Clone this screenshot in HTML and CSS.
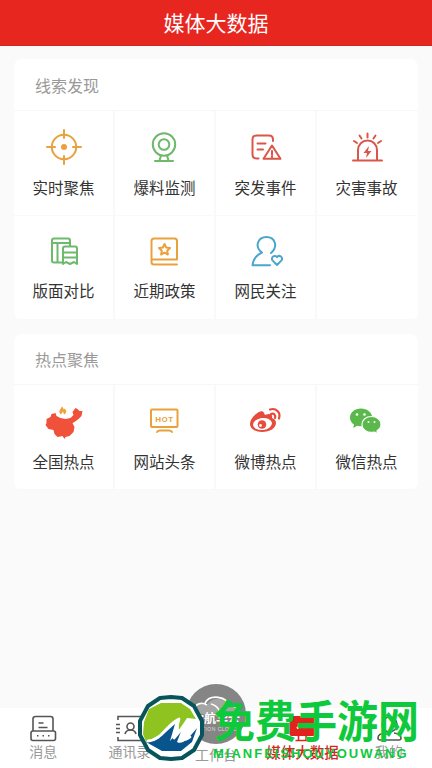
FILE: index.html
```html
<!DOCTYPE html>
<html lang="zh-CN">
<head>
    <meta charset="UTF-8">
    <meta name="viewport" content="width=device-width, initial-scale=1.0">
    <title>媒体大数据</title>
    <link rel="stylesheet" href="styles.css">
</head>

<body>
    <header class="header">媒体大数据</header>

    <main class="content">
        <section class="card">
            <h2 class="card-title">线索发现</h2>
            <div class="grid">
                <div class="item">
                    <svg class="icon orange" viewBox="0 0 40 40">
                        <circle cx="20" cy="20" r="12.2"/>
                        <path d="M20 3v8M20 29v8M3 20h8M29 20h8"/>
                        <circle class="solid" cx="20" cy="20" r="3"/>
                    </svg>
                    <span>实时聚焦</span>
                </div>
                <div class="item">
                    <svg class="icon green" viewBox="0 0 40 40">
                        <circle cx="19" cy="17.500" r="11.200"/>
                        <circle cx="19" cy="17.500" r="5.300"/>
                        <path d="M16 28.500l-1.500 5M22 28.500l1.500 5M10 34h18"/>
                    </svg>
                    <span>爆料监测</span>
                </div>
                <div class="item">
                    <svg class="icon red" viewBox="0 0 40 40">
                        <path d="M12.500 31.500H10.500Q6.500 31.500 6.500 27.500V12.500Q6.500 8.500 10.500 8.500H23Q27 8.500 27 12.500V14M11.500 16.500h8M11.500 22.500h5.500"/>
                        <path d="M26 18.500L34.500 31.800H17.500ZM26 24v3.500M26 29v1"/>
                    </svg>
                    <span>突发事件</span>
                </div>
                <div class="item">
                    <svg class="icon red" viewBox="0 0 40 40">
                        <path d="M11 33.500V23a9.500 9.500 0 0 1 19 0V33.500M6 33.500h29M20.500 6.500v4M12.500 8.500l2 3M28.500 8.500l-2 3M7 14l3 2M34 14l-3 2"/>
                        <path class="solid" d="M22 19l-5.500 7h3.500l-1 5 5.500-7h-3.500z"/>
                    </svg>
                    <span>灾害事故</span>
                </div>
                <div class="item">
                    <svg class="icon green" viewBox="0 0 40 40">
                        <path d="M18 31.500H10Q8 31.500 8 29.500V9.500Q8 7.500 10 7.500H24Q26 7.500 26 9.500V15M8 12h18M13.500 12v19"/>
                        <path d="M19 33V17.500Q19 15.500 21 15.500H31Q33 15.500 33 17.500V33l-3-2-4 2-4-2zM19 21.500h14M19 26.500h14"/>
                    </svg>
                    <span>版面对比</span>
                </div>
                <div class="item">
                    <svg class="icon orange" viewBox="0 0 40 40">
                        <path d="M32 28.500V10Q32 7.500 29.500 7.500H9Q6.500 7.500 6.500 10V31Q6.500 33.500 9 33.500H32M7 28.500h25"/>
                        <path d="M19.500 13l1.700 3.500 3.800.5-2.800 2.700.7 3.800-3.400-1.800-3.400 1.800.7-3.800L14 17l3.800-.5z"/>
                    </svg>
                    <span>近期政策</span>
                </div>
                <div class="item">
                    <svg class="icon blue" viewBox="0 0 40 40">
                        <path d="M24 34.300H6.500Q7.500 25.500 16 21.500C8 15.500 12 6 20.500 6S32.500 15.500 25 22"/>
                        <path d="M31 34l-4.500-4.600a2.700 2.700 0 0 1 4.500-3.300a2.700 2.700 0 0 1 4.500 3.300z"/>
                    </svg>
                    <span>网民关注</span>
                </div>
                <div class="item"></div>
            </div>
        </section>

        <section class="card">
            <h2 class="card-title">热点聚焦</h2>
            <div class="grid">
                <div class="item">
                    <svg class="icon" viewBox="0 0 40 40">
                        <path fill="#f0513a" d="M2.500 18l4-2 1-3 4-1 1 3 4 2 5 1 5-1 3-3-1-3 3-4 2 1 2 2h3l-1 5-3 3-4 3-2 1 2 4-1 5-4 4-4 1-1 2-2-3-5 1-3-3-1-4-5-1-3-4 1-2z"/>
                        <path fill="#f0a23a" d="M17 13.500c-3.500-3-.5-4.500.8-8 1.500 1.200 1.500 2 2 3l.8-1c2.500 2.500 2 4.500-.6 6l-1-3z"/>
                    </svg>
                    <span>全国热点</span>
                </div>
                <div class="item">
                    <svg class="icon orange" viewBox="0 0 40 40">
                        <rect x="6" y="8.500" width="26.500" height="17.500" rx="1"/>
                        <path d="M12 31q1-1.500 3-1.500h9q2 0 3 1.500"/>
                        <text class="hot" x="19.500" y="20.500">HOT</text>
                    </svg>
                    <span>网站头条</span>
                </div>
                <div class="item">
                    <svg class="icon" viewBox="0 0 40 40">
                        <path fill="#e64b3c" d="M18 12c-1-3-5-2-8 1-4 3-6 7-6 10 0 5 6 8 12 8 8 0 14-4 14-9 0-3-2-4-4-5 1-4-2-5-7-3z"/>
                        <ellipse cx="16.500" cy="23" rx="9.500" ry="6" fill="#fff" transform="rotate(-7 16.500 23)"/>
                        <circle cx="16" cy="23.500" r="4.300" fill="#e64b3c"/>
                        <circle cx="14.500" cy="24.500" r="1.400" fill="#fff"/>
                        <path stroke="#e64b3c" stroke-width="2.200" d="M24 8.500c6-2 11 3 9 9M25 13c3-1 5 1 4 4"/>
                    </svg>
                    <span>微博热点</span>
                </div>
                <div class="item">
                    <svg class="icon" viewBox="0 0 40 40">
                        <path fill="#5bb94c" d="M14 7.500C7.500 7.500 3 11.500 3 16.500c0 3 1.500 5.500 4 7l-.8 3.500 4-2.200c9 2 15-2 15-8.300 0-5-5-9-11.200-9z"/>
                        <path fill="#5bb94c" stroke="#fff" stroke-width="1.200" d="M24.500 15.500c-5.500 0-9.500 3.500-9.500 8 0 5 5 9 12.500 7.500l3 1.700-.5-3c2.500-1.500 4-3.500 4-6.200 0-4.500-4-8-9.500-8z"/>
                        <g fill="#fff"><circle cx="10" cy="13.500" r="1.300"/><circle cx="17.500" cy="13.500" r="1.300"/><circle cx="21.500" cy="21" r="1"/><circle cx="27.500" cy="21" r="1"/></g>
                    </svg>
                    <span>微信热点</span>
                </div>
            </div>
        </section>
    </main>

    <nav class="tabbar">
        <div class="tab">
            <svg class="tab-icon" viewBox="0 0 30 30">
                <path d="M5 18V6q0-2.500 2.500-2.500h15Q25 3.500 25 6v12M10.500 10h5M10.500 14.500h9"/>
                <rect x="3" y="18" width="24.500" height="9.500" rx="2"/>
                <path d="M9 22.800h1.500M14.500 22.800h1.500M20 22.800h1.500"/>
            </svg>
            <span>消息</span>
        </div>
        <div class="tab">
            <svg class="tab-icon" viewBox="0 0 30 30">
                <path d="M3 7V3.500h24v24H3V24M1 11.500h4M1 15.500h4M1 19.500h4"/>
                <circle cx="15.500" cy="13.500" r="3.500"/>
                <path d="M10 21q1-4 5.500-4t5.500 4"/>
            </svg>
            <span>通讯录</span>
        </div>
        <div class="tab tab-center"><span>工作台</span></div>
        <div class="tab active">
            <svg class="tab-icon" viewBox="0 0 30 30">
                <rect x="2.500" y="3" width="25.500" height="20" rx="2" fill="#e3221d" stroke="none"/>
                <path stroke="#e3221d" d="M11.500 23v4M19 23v4M8.500 27.500h13.500"/>
                <path stroke="#fff" stroke-width="2" d="M10 15.500l4-4 3.500 2.500 3.500-3.500"/>
            </svg>
            <span>媒体大数据</span>
        </div>
        <div class="tab">
            <svg class="tab-icon" viewBox="0 0 30 30">
                <circle cx="15.500" cy="11.500" r="7.500"/>
                <path d="M11 20c-5 .5-7 3-7 5q0 2 2 2h19q2 0 2-2c0-2-2-4.500-7-5"/>
            </svg>
            <span>我的</span>
        </div>
        <div class="cloud-btn">
            <svg viewBox="0 0 60 60">
                <path fill="#a5a5a5" d="M9 30c0-8 6-11 12-9 4-8 19-8 22 1 6 0 10 4 10 9z"/>
                <path fill="none" stroke="#fff" stroke-width="1.700" d="M8 27c1-8 8-9 13-6M19 19c5-9 22-7 24 3 6-1 10 3 10 7M25 20c5 1 8 5 9 9"/>
                <text class="cloud-name" x="30" y="39">七航华云</text>
                <text class="cloud-sub" x="30" y="47">NATION CLOUD</text>
            </svg>
        </div>
    </nav>

    <!-- site mark over the tab bar -->
    <div class="mark">
        <svg class="mark-logo" viewBox="0 0 70 68">
            <path fill="#fff" stroke="#07545a" stroke-width="4" stroke-linejoin="round" d="M24 4l11-1 11 1 12 8 8 15v14l-8 15-12 8-11 1-11-1-12-8-8-15V27l8-15z"/>
            <path fill="#8fc31f" d="M25 9h20l9 6 6 10-9-1-8 12-1-11-15 14-17 9-3-8 1-12 5-13z"/>
            <path fill="#07558c" d="M10 48c9 0 15-5 20-10l9-8-5 17 13-15-6 16c5 3 10-2 20-14l-5 14-11 9H26z"/>
            <path fill="none" stroke="#fff" stroke-width="2.800" stroke-linecap="round" stroke-linejoin="round" d="M12 47c14-1 18-16 31-22l-5 19 15-18-6 18q2 3 7-1"/>
        </svg>
        <div class="mark-text">
            <div class="mark-name">免费手游网</div>
            <div class="mark-latin">MIANFEISHOUYOUWANG</div>
        </div>
    </div>
</body>

</html>
```

FILE: styles.css
```css
* {
    box-sizing: border-box;
}

body {
    margin: 0;
    height: 768px;
    display: flex;
    flex-direction: column;
    overflow: hidden;
    position: relative;
    background: #fafafa;
    color: #333;
    font-family: "Noto Sans CJK SC", sans-serif;
}

.header {
    height: 46px;
    line-height: 44px;
    text-align: center;
    font-size: 21px;
    color: #fff;
    background: #e82620;
    border-bottom: 1px solid #c92b2b;
}

.content {
    flex: 1;
    padding: 13px 14px 0;
}

.card {
    margin-bottom: 14px;
    border-radius: 8px;
    overflow: hidden;
    background: #fff;
}

.card-title {
    margin: 0;
    height: 52px;
    padding-left: 21px;
    line-height: 53px;
    font-size: 16px;
    font-weight: normal;
    color: #999;
    border-bottom: 1px solid #f7f7f7;
}

.card + .card .card-title {
    height: 51px;
    line-height: 50px;
}

.grid {
    display: grid;
    grid-template-columns: repeat(4, 1fr);
}

.item {
    height: 104.5px;
    padding-top: 16px;
    display: flex;
    flex-direction: column;
    align-items: center;
    font-size: 15.5px;
    line-height: 24px;
    border-right: 2px solid #f9f9f9;
    border-bottom: 1px solid #f9f9f9;
}

.item:nth-child(4n) {
    border-right-color: #fff;
}

.icon {
    width: 40px;
    height: 40px;
    margin-bottom: 7.5px;
    fill: none;
    stroke-width: 2;
    stroke-linecap: round;
    stroke-linejoin: round;
}

.item:nth-child(n + 5) {
    padding-top: 15px;
}

.orange { stroke: #e9a23b; color: #e9a23b; }
.green { stroke: #6fb96c; color: #6fb96c; }
.red { stroke: #d95648; color: #d95648; }
.blue { stroke: #4aa6cf; color: #4aa6cf; }

.solid {
    fill: currentColor;
    stroke: none;
}

.hot {
    font: bold 8px "Liberation Sans", sans-serif;
    letter-spacing: 0.5px;
    text-anchor: middle;
    fill: #e9a23b;
    stroke: none;
}

.tabbar {
    position: relative;
    height: 60px;
    display: flex;
    background: #fff;
}

.tab {
    flex: 1;
    display: flex;
    flex-direction: column;
    align-items: center;
    padding-top: 5px;
    font-size: 14px;
    line-height: 17px;
    white-space: nowrap;
    color: #999;
}

.tab-icon {
    width: 30px;
    height: 30px;
    fill: none;
    stroke: #555;
    stroke-width: 1.6;
}

.tab-center {
    padding-top: 38px;
}

.active {
    color: #d5251f;
    font-size: 14.5px;
    font-weight: 500;
}

.cloud-btn {
    position: absolute;
    left: 186px;
    top: -24px;
    width: 60px;
    height: 60px;
    border-radius: 50%;
    background: #858585;
}

.cloud-name {
    font-size: 12px;
    font-weight: bold;
    text-anchor: middle;
    fill: #fff;
}

.cloud-sub {
    font: 5px "Liberation Sans", sans-serif;
    letter-spacing: 0.5px;
    text-anchor: middle;
    fill: #ddd;
}

.mark {
    position: absolute;
    left: 136px;
    top: 694px;
    display: flex;
}

.mark-logo {
    width: 70px;
    height: 68px;
}

.mark-text {
    padding-left: 8px;
    color: #0fc93c;
    white-space: nowrap;
}

.mark-name {
    height: 52px;
    line-height: 50px;
    font-size: 41px;
    font-weight: 700;
    transform: scaleY(1.08);
}

.mark-latin {
    margin-left: -1px;
    font: bold 13px/15px "Liberation Sans", sans-serif;
    letter-spacing: 2px;
}
```
